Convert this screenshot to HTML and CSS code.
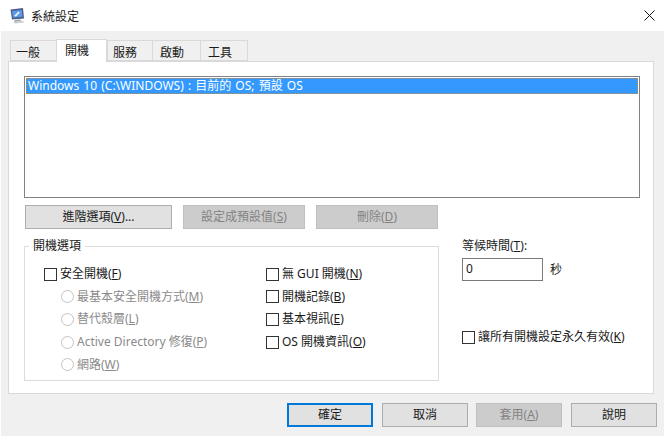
FILE: index.html
```html
<!doctype html>
<html lang="zh-Hant">
<head>
    <meta charset="utf-8">
    <title>系統設定</title>
    <link rel="stylesheet" href="styles.css">
</head>
<body>
    <div class="dialog">
        <div class="titlebar">
            <svg class="app-icon" width="16" height="16" viewBox="0 0 16 16">
                <path d="M0.5 1.5 L13 0 L14 10.5 L2 11.5 Z" fill="#4a5f8c"/>
                <path d="M2 3 L11.8 2 L12.4 8.8 L3 9.6 Z" fill="#5b9be8"/>
                <path d="M4 8 L8.5 3.4 L9.8 4.4 L6 8.4 Z" fill="#eef4ff"/>
                <path d="M5 12 L10 11.5 L11.5 13 L4 14 Z" fill="#a0a4ab"/>
                <path d="M3.5 14 L13 13 L14.5 14.5 L5 15.5 Z" fill="#c9ccd1"/>
            </svg>
            <span class="title">系統設定</span>
            <svg class="close" width="11" height="11" viewBox="0 0 11 11">
                <path d="M0.5 0.5 L10.5 10.5 M10.5 0.5 L0.5 10.5" stroke="#111" stroke-width="1" fill="none"/>
            </svg>
        </div>
        <div class="content">
            <div class="tabs">
                <div class="tab tab-general">一般</div>
                <div class="tab active">開機</div>
                <div class="tab tab-services">服務</div>
                <div class="tab tab-startup">啟動</div>
                <div class="tab tab-tools">工具</div>
            </div>
            <div class="panel">
                <div class="listbox">
                    <div class="list-item">Windows 10 (C:\WINDOWS) : 目前的 OS; 預設 OS</div>
                </div>
                <div class="list-buttons">
                    <button class="btn btn-wide">進階選項(<u>V</u>)...</button>
                    <button class="btn btn-mid" disabled>設定成預設值(<u>S</u>)</button>
                    <button class="btn btn-mid" disabled>刪除(<u>D</u>)</button>
                </div>
                <div class="lower">
                    <fieldset class="group">
                        <legend>開機選項</legend>
                        <div class="group-col">
                            <div class="option"><span class="check"></span>安全開機(<u>F</u>)</div>
                            <div class="option sub"><span class="radio"></span>最基本安全開機方式(<u>M</u>)</div>
                            <div class="option sub"><span class="radio"></span>替代殼層(<u>L</u>)</div>
                            <div class="option sub"><span class="radio"></span>Active Directory 修復(<u>P</u>)</div>
                            <div class="option sub"><span class="radio"></span>網路(<u>W</u>)</div>
                        </div>
                        <div class="group-col col-right">
                            <div class="option"><span class="check"></span>無 GUI 開機(<u>N</u>)</div>
                            <div class="option"><span class="check"></span>開機記錄(<u>B</u>)</div>
                            <div class="option"><span class="check"></span>基本視訊(<u>E</u>)</div>
                            <div class="option"><span class="check"></span>OS 開機資訊(<u>O</u>)</div>
                        </div>
                    </fieldset>
                    <div class="side">
                        <div class="timeout-label">等候時間(<u>T</u>):</div>
                        <div class="timeout-row">
                            <div class="timeout-input">0</div>
                            <span>秒</span>
                        </div>
                        <div class="option permanent"><span class="check"></span>讓所有開機設定永久有效(<u>K</u>)</div>
                    </div>
                </div>
            </div>
            <div class="footer">
                <button class="btn btn-foot default">確定</button>
                <button class="btn btn-foot">取消</button>
                <button class="btn btn-foot btn-apply" disabled>套用(<u>A</u>)</button>
                <button class="btn btn-foot">說明</button>
            </div>
        </div>
    </div>
</body>
</html>
```

FILE: styles.css
```css
* {
    box-sizing: border-box;
}
html, body {
    margin: 0;
    padding: 0;
    background-color: #fff;
}
body {
    font-family: "Noto Sans", "Noto Sans CJK TC", sans-serif;
    font-size: 12px;
    line-height: 16px;
    color: #1a1a1a;
    overflow: hidden;
}
.dialog {
    width: 664px;
    height: 436px;
    padding-left: 1px;
    display: flex;
    flex-direction: column;
}
.titlebar {
    height: 31px;
    flex: none;
    display: flex;
    align-items: center;
    background-color: #fff;
    padding-left: 9px;
    padding-right: 9px;
}
.app-icon {
    margin-right: 5px;
}
.title {
    flex: 1;
    padding-top: 2px;
}
.content {
    flex: 1;
    background-color: #f0f0f0;
    padding: 8px 6px 0 7px;
    display: flex;
    flex-direction: column;
}
.tabs {
    display: flex;
    align-items: flex-end;
    height: 22px;
    flex: none;
    padding-left: 2px;
    position: relative;
    z-index: 1;
}
.tab {
    height: 21px;
    margin-left: -1px;
    border: 1px solid #d9d9d9;
    background-color: #f0f0f0;
    line-height: 20px;
    padding: 2px 0 0 7px;
}
.tab:first-child {
    margin-left: 0;
}
.tab-general {
    width: 47px;
    padding-left: 5px;
}
.tab-services {
    width: 46px;
    margin-left: 0;
    padding-left: 5px;
}
.tab-startup {
    width: 49px;
}
.tab-tools {
    width: 48px;
}
.tab.active {
    width: 51px;
    height: 23px;
    margin-bottom: -1px;
    background-color: #fff;
    border-bottom: none;
    padding: 1px 0 0 8px;
}
.panel {
    width: 646px;
    height: 333px;
    flex: none;
    background-color: #fff;
    border: 1px solid #d9d9d9;
    padding: 14px 14px 0 15px;
}
.listbox {
    width: 616px;
    height: 122px;
    border: 1px solid #828282;
    padding: 1px;
}
.list-item {
    height: 16px;
    background-color: #3399ff;
    color: #fff;
    border: 1px dotted #c98a3c;
    line-height: 13px;
    padding-left: 1px;
    white-space: nowrap;
    word-spacing: 1px;
}
.list-buttons {
    display: flex;
    gap: 11px;
    margin-top: 7px;
    margin-left: 1px;
}
.btn {
    height: 24px;
    padding: 0;
    font: inherit;
    color: #1a1a1a;
    background-color: #e1e1e1;
    border: 1px solid #adadad;
}
.btn:disabled {
    background-color: #cccccc;
    border-color: #bfbfbf;
    color: #838383;
}
.btn-wide {
    width: 147px;
}
.btn-mid {
    width: 122px;
}
.lower {
    display: flex;
    margin-top: 9px;
}
.group {
    width: 415px;
    height: 143px;
    min-width: 0;
    margin: 0;
    padding: 9px 0 0 19px;
    border: 1px solid #dcdcdc;
    display: flex;
    flex: none;
}
.group legend {
    margin-left: -15px;
    padding: 0 4px 0 4px;
    line-height: 16px;
}
.group-col {
    width: 222px;
    flex: none;
    display: flex;
    flex-direction: column;
}
.col-right {
    width: 172px;
}
.option {
    height: 22.6px;
    display: flex;
    align-items: center;
    white-space: nowrap;
}
.option.sub {
    padding-left: 17px;
    color: #8a8a8a;
}
.check {
    width: 13px;
    height: 13px;
    flex: none;
    border: 1px solid #333;
    background-color: #fff;
    margin-right: 3px;
}
.radio {
    width: 13px;
    height: 13px;
    flex: none;
    border: 1px solid #c4c4c4;
    border-radius: 50%;
    margin-right: 3px;
}
.side {
    margin-left: 23px;
}
.timeout-label {
    height: 16px;
}
.timeout-row {
    display: flex;
    align-items: center;
    gap: 7px;
    margin-top: 4px;
}
.timeout-input {
    width: 81px;
    height: 23px;
    border: 1px solid #7a7a7a;
    padding-left: 3px;
    line-height: 19px;
}
.permanent {
    margin-top: 45px;
}
.footer {
    display: flex;
    gap: 9px;
    margin-top: 9px;
    padding-left: 279px;
}
.btn-foot {
    width: 86px;
    flex: none;
}
.btn-apply {
    margin-left: -1px;
}
.btn-foot.default {
    border: 2px solid #0078d7;
}
```
